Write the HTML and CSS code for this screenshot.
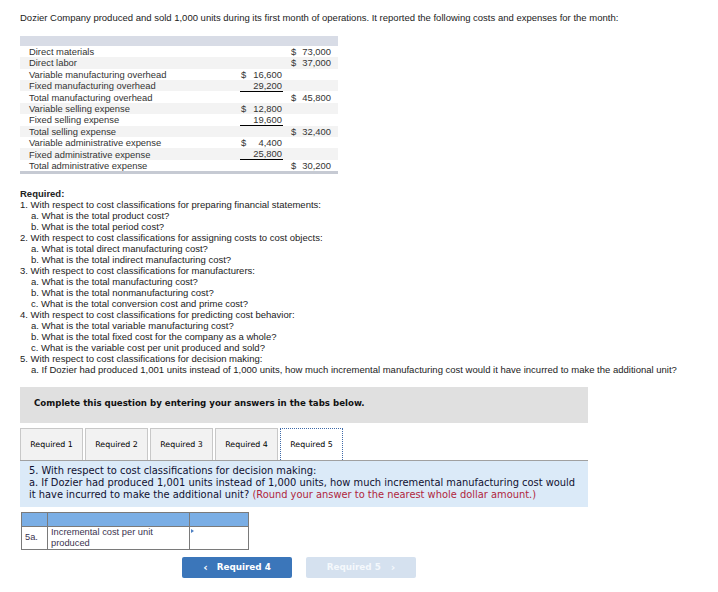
FILE: index.html
```html
<!DOCTYPE html>
<html>
<head>
<meta charset="utf-8">
<link rel="stylesheet" href="styles.css">
</head>
<body>
<div class="page">
  <p class="intro">Dozier Company produced and sold 1,000 units during its first month of operations. It reported the following costs and expenses for the month:</p>

  <table class="costs">
    <colgroup><col class="c-label"><col class="c-mid"><col class="c-right"></colgroup>
    <thead><tr><th colspan="3"></th></tr></thead>
    <tbody>
      <tr><td class="lbl">Direct materials</td><td class="mid"></td><td class="rt"><span class="num"><span>$</span><span>73,000</span></span></td></tr>
      <tr><td class="lbl">Direct labor</td><td class="mid"></td><td class="rt"><span class="num"><span>$</span><span>37,000</span></span></td></tr>
      <tr><td class="lbl">Variable manufacturing overhead</td><td class="mid"><span class="num"><span>$</span><span>16,600</span></span></td><td class="rt"></td></tr>
      <tr><td class="lbl">Fixed manufacturing overhead</td><td class="mid ul"><span class="num"><span></span><span>29,200</span></span></td><td class="rt"></td></tr>
      <tr><td class="lbl">Total manufacturing overhead</td><td class="mid"></td><td class="rt"><span class="num"><span>$</span><span>45,800</span></span></td></tr>
      <tr><td class="lbl">Variable selling expense</td><td class="mid"><span class="num"><span>$</span><span>12,800</span></span></td><td class="rt"></td></tr>
      <tr><td class="lbl">Fixed selling expense</td><td class="mid ul"><span class="num"><span></span><span>19,600</span></span></td><td class="rt"></td></tr>
      <tr><td class="lbl">Total selling expense</td><td class="mid"></td><td class="rt"><span class="num"><span>$</span><span>32,400</span></span></td></tr>
      <tr><td class="lbl">Variable administrative expense</td><td class="mid"><span class="num"><span>$</span><span>4,400</span></span></td><td class="rt"></td></tr>
      <tr><td class="lbl">Fixed administrative expense</td><td class="mid ul"><span class="num"><span></span><span>25,800</span></span></td><td class="rt"></td></tr>
      <tr><td class="lbl">Total administrative expense</td><td class="mid"></td><td class="rt"><span class="num"><span>$</span><span>30,200</span></span></td></tr>
    </tbody>
  </table>

  <div class="required">
    <div class="req-title">Required:</div>
    <div class="q">1. With respect to cost classifications for preparing financial statements:</div>
    <div class="sq">a. What is the total product cost?</div>
    <div class="sq">b. What is the total period cost?</div>
    <div class="q">2. With respect to cost classifications for assigning costs to cost objects:</div>
    <div class="sq">a. What is total direct manufacturing cost?</div>
    <div class="sq">b. What is the total indirect manufacturing cost?</div>
    <div class="q">3. With respect to cost classifications for manufacturers:</div>
    <div class="sq">a. What is the total manufacturing cost?</div>
    <div class="sq">b. What is the total nonmanufacturing cost?</div>
    <div class="sq">c. What is the total conversion cost and prime cost?</div>
    <div class="q">4. With respect to cost classifications for predicting cost behavior:</div>
    <div class="sq">a. What is the total variable manufacturing cost?</div>
    <div class="sq">b. What is the total fixed cost for the company as a whole?</div>
    <div class="sq">c. What is the variable cost per unit produced and sold?</div>
    <div class="q">5. With respect to cost classifications for decision making:</div>
    <div class="sq">a. If Dozier had produced 1,001 units instead of 1,000 units, how much incremental manufacturing cost would it have incurred to make the additional unit?</div>
  </div>

  <div class="complete">Complete this question by entering your answers in the tabs below.</div>

  <div class="tabs">
    <div class="tab">Required 1</div>
    <div class="tab">Required 2</div>
    <div class="tab">Required 3</div>
    <div class="tab">Required 4</div>
    <div class="tab active">Required 5</div>
  </div>

  <div class="panel">
    <div>5. With respect to cost classifications for decision making:</div>
    <div>a. If Dozier had produced 1,001 units instead of 1,000 units, how much incremental manufacturing cost would</div>
    <div>it have incurred to make the additional unit? <span class="red">(Round your answer to the nearest whole dollar amount.)</span></div>
  </div>

  <table class="answer">
    <colgroup><col class="a1"><col class="a2"><col class="a3"></colgroup>
    <tr class="ahead"><td></td><td></td><td></td></tr>
    <tr class="arow"><td class="acode">5a.</td><td class="alabel">Incremental cost per unit produced</td><td class="ainput"><span class="marker"></span></td></tr>
  </table>

  <div class="nav">
    <div class="btn prev"><span class="chev">&#8249;</span>Required 4</div>
    <div class="btn next">Required 5<span class="chev">&#8250;</span></div>
  </div>
</div>
</body>
</html>
```

FILE: styles.css
```css
html, body { margin: 0; padding: 0; background: #fff; }
body { font-family: "Liberation Sans", Arial, sans-serif; color: #222; }
.page { padding-left: 20px; width: 568px; }

.intro { margin: 12px 0 0 0; font-size: 9.5px; line-height: 11px; white-space: nowrap; }

.costs {
  margin-top: 13px;
  width: 318px;
  border-collapse: collapse;
  font-size: 9.4px;
  color: #333;
  table-layout: fixed;
}
.costs .c-label { width: 220px; }
.costs .c-mid { width: 43px; }
.costs .c-right { width: 55px; }
.costs thead th { height: 10px; padding: 0; background: #d8dce6; }
.costs tbody tr { height: 11.33px; }
.costs tbody tr:nth-child(even) { background: #f3f3f3; }
.costs tbody tr:last-child td { border-bottom: 3px solid #c6cad3; }
.costs td { padding: 0; line-height: 11px; vertical-align: middle; }
.costs .lbl { padding-left: 9px; white-space: nowrap; }
.costs .mid { padding: 0; }
.costs .mid.ul { border-bottom: 1px solid #000; }
.costs .rt { padding: 0 6px 0 7px; }
.num { display: flex; justify-content: space-between; padding: 0 1px; }

.required { margin-top: 14px; font-size: 9.5px; line-height: 11px; color: #222; }
.req-title { font-weight: bold; }
.q { padding-left: 0; white-space: nowrap; }
.sq { padding-left: 11px; white-space: nowrap; }

.complete {
  margin-top: 12px;
  height: 36px;
  background: #e0e0e0;
  box-sizing: border-box;
  padding: 10px 0 0 14px;
  font-family: "DejaVu Sans", Verdana, sans-serif;
  font-weight: bold;
  font-size: 8.65px;
  line-height: 12px;
  color: #111;
}

.tabs { display: flex; gap: 2px; margin-top: 5px; }
.tab {
  width: 63px;
  height: 32px;
  box-sizing: border-box;
  background: #f2f2f2;
  border: 1px solid #c8c8c8;
  border-bottom: none;
  font-family: "DejaVu Sans", Verdana, sans-serif;
  font-size: 7.9px;
  color: #000;
  display: flex;
  align-items: center;
  justify-content: center;
}
.tab.active { background: #fff; border: 1px dotted #3f6aa8; border-bottom: none; }

.panel {
  border-top: 1px solid #a0a0a0;
  background: #dbeaf8;
  padding: 4px 4px 6px 9px;
  font-family: "DejaVu Sans", Verdana, sans-serif;
  font-size: 9.9px;
  line-height: 12px;
  color: #101030;
  white-space: nowrap;
}
.red { color: #b0263d; }

.answer {
  margin-top: 5px;
  margin-left: 1px;
  border-collapse: collapse;
  table-layout: fixed;
  width: 227px;
  font-size: 9.3px;
}
.answer .a1 { width: 26px; }
.answer .a2 { width: 142px; }
.answer .a3 { width: 59px; }
.answer td { border: 1px solid #7a7a7a; padding: 0; }
.ahead td { background: #7aaee5; height: 13px; }
.arow td { height: 22px; vertical-align: middle; color: #3a3350; line-height: 11px; }
.acode { padding-left: 3px !important; }
.alabel { padding-left: 3px !important; }
.ainput { vertical-align: top !important; position: relative; }
.marker {
  position: absolute; left: 1px; top: 2px;
  width: 0; height: 0;
  border-top: 2px solid transparent;
  border-bottom: 2px solid transparent;
  border-left: 3px solid #4d7fc2;
}

.nav { display: flex; gap: 14px; margin-top: 7px; padding-left: 162px; }
.btn {
  width: 110px;
  height: 21px;
  border-radius: 2px;
  display: flex;
  align-items: center;
  justify-content: center;
  font-family: "DejaVu Sans", Verdana, sans-serif;
  font-weight: bold;
  font-size: 8.8px;
  color: #fff;
}
.btn.prev { background: #3b76ba; }
.btn.next { background: #d5e1ef; color: #f4f8fc; }
.prev .chev { margin-right: 9px; font-size: 11px; font-weight: bold; }
.next .chev { margin-left: 10px; font-size: 11px; font-weight: bold; }
```
